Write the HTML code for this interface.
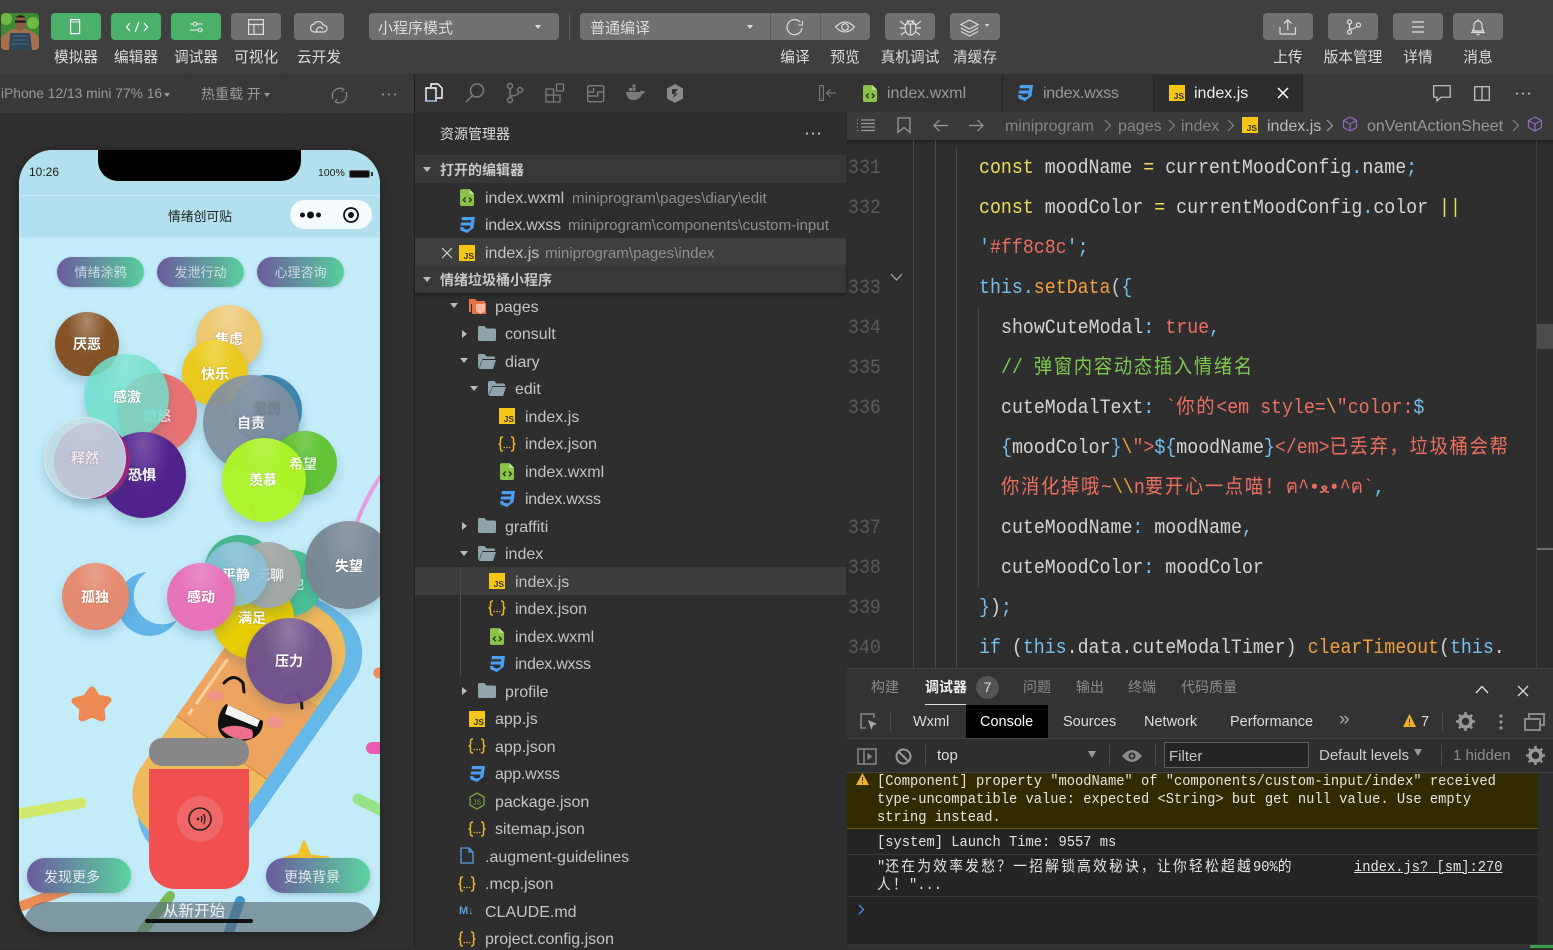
<!DOCTYPE html>
<html lang="zh"><head><meta charset="utf-8"><title>IDE</title>
<style>
html,body{margin:0;padding:0;background:#2e2e2e;}
body{width:1553px;height:948px;position:relative;overflow:hidden;font-family:"Liberation Sans","Noto Sans CJK SC",sans-serif;}
.a{position:absolute;}
.t{position:absolute;white-space:nowrap;line-height:20px;height:20px;}
.btn{position:absolute;top:13px;height:27px;width:50px;border-radius:4px;background:#707070;}
.g{background:#4ab06a;}
.lb{position:absolute;top:48px;line-height:20px;font-size:14.7px;color:#dcdcdc;white-space:nowrap;text-align:center;transform:translateX(-50%);}
svg{position:absolute;overflow:visible;}
.s{fill:none;stroke:#ddd;stroke-width:1.2;}
.n{font-size:16px;color:#c4c4c4;margin-top:1px;}
.w{letter-spacing:-.25px;}
.p{font-size:15.1px;color:#8f8f8f;margin-top:1px;}
.h{font-size:14px;color:#c8c8c8;font-weight:bold;margin-top:1px;}
.tri{position:absolute;width:0;height:0;}
.dn{border-left:4px solid transparent;border-right:4px solid transparent;border-top:5px solid #bbb;}
.rt{border-top:4px solid transparent;border-bottom:4px solid transparent;border-left:5px solid #bbb;}
.c{position:absolute;white-space:pre;font-family:"Liberation Mono","Noto Sans CJK SC",monospace;font-size:20px;line-height:24px;height:24px;color:#d4d4d4;margin-top:2px;transform:scaleX(.9125);transform-origin:0 50%;}
.c i{font-style:normal;}
.zh{letter-spacing:1.92px;}
.ln{position:absolute;left:848px;font-family:"Liberation Mono",monospace;font-size:20px;line-height:24px;color:#5a5a5a;margin-top:2px;transform:scaleX(.9125);transform-origin:0 50%;}
.ky{color:#ecdf5a;}.bl{color:#74c0f0;}.or{color:#f0a03c;}.rd{color:#ec6f5f;}.gr{color:#7ec850;}.dm{color:#c8c8c8;}
.gd{position:absolute;width:1px;background:#484848;}
.k{position:absolute;white-space:pre;font-family:"Liberation Mono","Noto Sans CJK SC",monospace;font-size:15px;line-height:18px;color:#e4e4e4;margin-top:2px;transform:scaleX(.9167);transform-origin:0 50%;}
.kz{letter-spacing:2.44px;}
.d{position:absolute;font-size:14.5px;line-height:20px;color:#ddd;white-space:nowrap;}
.f{font-size:15px;}
.z{position:absolute;font-size:14px;line-height:20px;color:#8c8c8c;white-space:nowrap;}
.sep{position:absolute;width:1px;background:#4a4a4a;}
.b{position:absolute;border-radius:50%;box-shadow:0 6px 10px rgba(40,90,110,.22);}
.bt{position:absolute;transform:translate(-50%,-50%);font-size:14px;font-weight:bold;color:#fff;white-space:nowrap;text-shadow:0 0 2px rgba(0,0,0,.25);}
.pill{position:absolute;top:107px;height:30px;width:87px;border-radius:15px;background:linear-gradient(90deg,#6b5a9e,#58cf9f);color:rgba(255,255,255,.68);font-size:13px;line-height:31px;text-align:center;box-shadow:0 1px 3px rgba(60,110,130,.3);}
.act{position:absolute;top:708px;height:35px;width:104px;border-radius:18px;background:linear-gradient(90deg,#6b5a9e,#5bd3a0);color:rgba(255,255,255,.82);font-size:14px;line-height:38px;box-shadow:0 2px 6px rgba(60,110,130,.3);}
</style></head><body>
<svg width="0" height="0" style="position:absolute">
<defs>
<symbol id="wx" viewBox="0 0 16 18"><path d="M2 0h8l5 5v11a2 2 0 0 1-2 2H2a2 2 0 0 1-2-2V2a2 2 0 0 1 2-2z" fill="#8bc34a"/><path d="M10 0l5 5h-5z" fill="#c5e1a5"/><path d="M6 9l-2.500 2.500L6 14M9.500 9l2.500 2.500L9.500 14" fill="none" stroke="#26361a" stroke-width="1.500"/></symbol>
<symbol id="cs" viewBox="0 0 16 16"><path d="M3 0h13l-1.500 11L8 16 1.500 13.500 1 10h3.400l.2 1.500L8 12.500l3-1 .4-3H1.500l.5-3h10l.3-2.300H2.500z" fill="#4a9ff0"/></symbol>
<symbol id="js" viewBox="0 0 16 16"><rect width="16" height="16" fill="#f5c518"/><text x="4.600" y="14" font-size="8.500" font-weight="bold" fill="#333" font-family="Liberation Sans">JS</text></symbol>
<symbol id="jn" viewBox="0 0 20 16"><path d="M6 1Q3.500 1 3.500 3v3q0 2-2 2 2 0 2 2v3q0 2 2.500 2M14 1q2.500 0 2.500 2v3q0 2 2 2-2 0-2 2v3q0 2-2.500 2" fill="none" stroke="#f0b429" stroke-width="1.500"/><circle cx="7.300" cy="11.500" r=".8" fill="#f0b429"/><circle cx="10" cy="11.500" r=".8" fill="#f0b429"/><circle cx="12.700" cy="11.500" r=".8" fill="#f0b429"/></symbol>
<symbol id="fo" viewBox="0 0 18 15"><path d="M1.500 0h5l2 2.500h8A1.500 1.500 0 0 1 18 4v9.500A1.500 1.500 0 0 1 16.500 15h-15A1.500 1.500 0 0 1 0 13.500v-12A1.500 1.500 0 0 1 1.500 0z" fill="#90a4ae"/></symbol>
<symbol id="fp" viewBox="0 0 18 15"><path d="M1.500 0h5l2 2.500h7A1.500 1.500 0 0 1 17 4v1H4.500L1.500 12V14H1.500A1.500 1.500 0 0 1 0 12.500v-11A1.500 1.500 0 0 1 1.500 0z" fill="#90a4ae"/><path d="M4.500 6H18l-3 9H1z" fill="#90a4ae"/></symbol>
<symbol id="cu" viewBox="0 0 16 16"><path d="M8 1l6.500 3.500v7L8 15l-6.500-3.500v-7zM1.500 4.500L8 8l6.500-3.500M8 8v7" fill="none" stroke="#8e6dbf" stroke-width="1.200"/></symbol>
</defs></svg>

<!-- top bar -->
<div class="a" style="left:0;top:0;width:1553px;height:74px;background:#3f3f3f"></div>
<svg style="left:1px;top:13px" width="38" height="37" viewBox="0 0 38 37"><defs><clipPath id="av"><rect width="38" height="37" rx="4"/></clipPath></defs><g clip-path="url(#av)"><rect width="38" height="37" fill="#3d8a32"/><circle cx="5" cy="6" r="6" fill="#6fb945"/><circle cx="32" cy="10" r="6" fill="#6fb945"/><path d="M0 37V25q5-6 10-8l9-2 9 2q6 2 10 8v12z" fill="#a8704f"/><path d="M9 20h20l2 17H8z" fill="#2d4658"/><path d="M12 23h14M11 27h16M10 31h18" stroke="#4a6a7c"/><ellipse cx="19.500" cy="10" rx="5.500" ry="8" fill="#8d5e42"/><rect x="14" y="7.500" width="11" height="2.200" fill="#1d1d1d"/><path d="M14.500 4.500q5-4.500 10 0z" fill="#1d1d1d"/></g></svg>

<div class="btn g" style="left:51px"></div><div class="btn g" style="left:111px"></div><div class="btn g" style="left:171px"></div>
<div class="btn" style="left:231px"></div><div class="btn" style="left:294px"></div>
<svg style="left:70px;top:19px" width="12" height="16"><rect x=".6" y=".6" width="9" height="14" class="s" style="stroke:#fff"/><path d="M1 3h8" class="s"/></svg>
<svg style="left:125px;top:21px" width="24" height="12"><path d="M5 2L1.500 6 5 10M19 2l3.500 4L19 10M14 1l-4 10" class="s" style="stroke:#fff"/></svg>
<svg style="left:190px;top:21px" width="14" height="12"><path d="M0 3h3M7 3h6M0 9h8M12 9h1" class="s"/><circle cx="5" cy="3" r="1.800" class="s"/><circle cx="10" cy="9" r="1.800" class="s"/></svg>
<svg style="left:248px;top:19px" width="16" height="16"><rect x=".6" y=".6" width="14.800" height="14.800" class="s"/><path d="M.6 5.500h14.800M6 5.500v10" class="s"/></svg>
<svg style="left:310px;top:20px" width="18" height="14"><path d="M5 12a4 4 0 0 1-1-8 5 5 0 0 1 9 1 3.500 3.500 0 0 1 1 7zM7 12a3 3 0 0 1 6-3" class="s"/></svg>
<div class="lb" style="left:76px">模拟器</div><div class="lb" style="left:136px">编辑器</div><div class="lb" style="left:196px">调试器</div><div class="lb" style="left:256px">可视化</div><div class="lb" style="left:319px">云开发</div>

<div class="a" style="left:369px;top:13px;width:190px;height:27px;background:#707070;border-radius:4px"></div>
<div class="t" style="left:378px;top:19px;font-size:15px;color:#dcdcdc">小程序模式</div>
<div class="tri" style="left:535px;top:25px;border-left:3.500px solid transparent;border-right:3.500px solid transparent;border-top:4px solid #ddd"></div>
<div class="a" style="left:569px;top:13px;width:1px;height:27px;background:#5a5a5a"></div>
<div class="a" style="left:580px;top:13px;width:290px;height:27px;background:#707070;border-radius:4px"></div>
<div class="a" style="left:770px;top:13px;width:1px;height:27px;background:#5c5c5c"></div><div class="a" style="left:820px;top:13px;width:1px;height:27px;background:#5c5c5c"></div>
<div class="t" style="left:590px;top:19px;font-size:15px;color:#dcdcdc">普通编译</div>
<div class="tri" style="left:747px;top:25px;border-left:3.500px solid transparent;border-right:3.500px solid transparent;border-top:4px solid #ddd"></div>
<svg style="left:785px;top:18px" width="20" height="18"><path d="M15 4a7.500 7.500 0 1 0 2 6" class="s"/><path d="M13 7h4.500V3" class="s" style="stroke-width:1"/></svg>
<svg style="left:835px;top:20px" width="20" height="14"><path d="M.6 7Q10-3 19.400 7 10 17 .6 7z" class="s"/><circle cx="10" cy="7" r="3.300" class="s"/></svg>
<div class="btn" style="left:885px"></div><div class="btn" style="left:950px"></div>
<svg style="left:900px;top:17px" width="21" height="19"><ellipse cx="10.500" cy="11" rx="5.500" ry="7" class="s"/><path d="M5.500 7h10M10.500 7v11M7 3l2 3M14 3l-2 3M0 4l5 4M21 4l-5 4M0 11h5M16 11h5M1 18l4-3M20 18l-4-3" class="s"/></svg>
<svg style="left:960px;top:19px" width="32" height="17"><path d="M9.500 1L18 5.500 9.500 10 1 5.500zM1 9l8.500 4.500L18 9M1 12.500L9.500 17 18 12.500" class="s"/></svg>
<div class="tri" style="left:985px;top:24px;border-left:2.500px solid transparent;border-right:2.500px solid transparent;border-top:3px solid #ddd"></div>
<div class="lb" style="left:795px">编译</div><div class="lb" style="left:845px">预览</div><div class="lb" style="left:910px">真机调试</div><div class="lb" style="left:975px">清缓存</div>

<div class="btn" style="left:1263px"></div><div class="btn" style="left:1328px"></div><div class="btn" style="left:1393px"></div><div class="btn" style="left:1453px"></div>
<svg style="left:1279px;top:19px" width="18" height="16"><path d="M1 8v7h15.500V8M8.800 11V1M5 4.500L8.800 1l3.800 3.500" class="s"/></svg>
<svg style="left:1346px;top:19px" width="16" height="16"><circle cx="3.500" cy="3" r="2" class="s"/><circle cx="3.500" cy="13" r="2" class="s"/><circle cx="12.500" cy="6" r="2" class="s"/><path d="M3.500 5v6M3.500 10q6 0 7.500-3" class="s"/></svg>
<svg style="left:1411px;top:21px" width="14" height="12"><path d="M1 1h12M1 6h12M1 11h12" class="s"/></svg>
<svg style="left:1471px;top:18px" width="14" height="18"><path d="M1 13q2-1 2-4V7a4 4 0 0 1 8 0v2q0 3 2 4zM0 14.500h14M5.500 16.500h3" class="s"/><path d="M7 1v2" class="s"/></svg>
<div class="lb" style="left:1288px">上传</div><div class="lb" style="left:1353px">版本管理</div><div class="lb" style="left:1418px">详情</div><div class="lb" style="left:1478px">消息</div>

<!-- simulator column -->
<div class="a" style="left:0;top:74px;width:414px;height:874px;background:#303030"></div>
<div class="a" style="left:0;top:74px;width:414px;height:39px;background:#393939"></div>
<div class="a" style="left:186px;top:74px;width:1px;height:39px;background:#353535"></div><div class="a" style="left:285px;top:74px;width:1px;height:39px;background:#353535"></div>
<div class="a" style="left:414px;top:74px;width:1px;height:874px;background:#222"></div>
<div class="t" style="left:1px;top:84px;font-size:13.8px;color:#9a9a9a">iPhone 12/13 mini 77% 16</div>
<div class="tri" style="left:164px;top:93px;border-left:3.500px solid transparent;border-right:3.500px solid transparent;border-top:4px solid #999"></div>
<div class="t" style="left:201px;top:84px;font-size:14px;color:#9a9a9a">热重载 开</div>
<div class="tri" style="left:264px;top:93px;border-left:3px solid transparent;border-right:3px solid transparent;border-top:4px solid #999"></div>
<svg style="left:331px;top:87px" width="17" height="17"><path d="M2 12A7.500 7.500 0 0 1 12 2M15 5a7.500 7.500 0 0 1-10 10" fill="none" stroke="#888" stroke-width="1.200"/><path d="M10 .5L13 2.500 10.500 5M7 16.500L4 14.500 6.500 12" fill="none" stroke="#888"/></svg>
<svg style="left:381px;top:93px" width="16" height="3"><circle cx="2" cy="1.500" r="1" fill="#999"/><circle cx="8" cy="1.500" r="1" fill="#999"/><circle cx="14" cy="1.500" r="1" fill="#999"/></svg>

<!-- phone -->
<div class="a" style="left:19px;top:150px;width:361px;height:782px;border-radius:34px;overflow:hidden;background:#c3ebf8;box-shadow:0 2px 12px rgba(0,0,0,.35)">
<svg style="left:0;top:0" width="361" height="782" viewBox="19 150 361 782">
<path d="M380 477Q365 500 357 522" fill="none" stroke="#e79ede" stroke-width="4" stroke-linecap="round"/>
<path d="M252 505l2 15" stroke="#e85cb0" stroke-width="4"/>
<path d="M19 814l62-11" stroke="#cfe96a" stroke-width="11" stroke-linecap="round"/>
<path d="M358 799l24 12" stroke="#97e388" stroke-width="11" stroke-linecap="round"/>
<path d="M372 748h12" stroke="#ea5cb0" stroke-width="12" stroke-linecap="round"/>
<path d="M379 673h6" stroke="#ee8a55" stroke-width="11" stroke-linecap="round"/>
<path d="M19 907l55-20" stroke="#ee8a55" stroke-width="10"/>
<path d="M142 932l28-36" stroke="#7ab95a" stroke-width="10" stroke-linecap="round"/>
<path d="M228 935l12-34" stroke="#3d94d0" stroke-width="10" stroke-linecap="round"/>
<path d="M92 690l5 8 11 2-7 8 1 10-10-4-10 4 1-10-8-7 11-3z" fill="#ee8b55" stroke="#ee8b55" stroke-width="7" stroke-linejoin="round"/>
<path d="M304 842l6 14 18 2-10 14-30 0-3-14 14-3z" fill="#f2c22c" stroke="#f2c22c" stroke-width="3" stroke-linejoin="round"/>
<path d="M147 572a32 32 0 1 0 30 48 27 27 0 0 1-30-48z" fill="#60b4e8"/>
<g transform="translate(250,733) rotate(-55)"><rect x="-150" y="-55" width="300" height="110" rx="48" fill="#66b8e8"/></g>
<g transform="translate(239,723) rotate(-55)"><rect x="-140" y="-55" width="280" height="110" rx="48" fill="#eeb95c"/><rect x="-30" y="-55" width="88" height="110" fill="#eda45f"/><path d="M-30-55V55" stroke="#dc8d48" stroke-width="1.500"/><path d="M58-55V55" stroke="#e39650" stroke-width="1"/><path d="M-22-46H60" stroke="#f6d2a0" stroke-width="3" stroke-dasharray="7 6 55" fill="none"/></g>
<ellipse cx="216" cy="696" rx="9" ry="5" fill="#f09090" opacity=".85"/><ellipse cx="275" cy="722" rx="8" ry="6" fill="#f09090" opacity=".85"/>
<path d="M224 683q10-11 19 0l1 9" fill="none" stroke="#111" stroke-width="3" stroke-linecap="round"/>
<path d="M284 698q10-8 17 0l1 10" fill="none" stroke="#111" stroke-width="3" stroke-linecap="round"/>
<path d="M226 704l37 17q0 12-10 17t-23 2q-12-4-12-16 0-12 8-20z" fill="#111"/>
<path d="M228 705l32 15-3 7-32-13z" fill="#f4f4f4"/>
<path d="M221 729q14-7 31 1 2 4 0 8-18 5-31-9z" fill="#f0708c"/>
</svg>
<div class="a" style="left:0;top:0;width:361px;height:87px;background:#b3e0ee"></div>
<div class="a" style="left:0;top:45px;width:361px;height:1px;background:#c6ecf5"></div>
<div class="a" style="left:79px;top:0;width:203px;height:31px;background:#000;border-radius:0 0 20px 20px"></div>
<div class="t" style="left:10px;top:12px;font-size:12px;color:#222">10:26</div>
<div class="t" style="left:299px;top:13px;font-size:10.500px;color:#222">100%</div>
<div class="a" style="left:330px;top:20px;width:19px;height:6px;background:#111;border:1px solid #666;border-radius:2px"></div>
<div class="a" style="left:352px;top:22px;width:1.500px;height:4px;background:#333"></div>
<div class="t" style="left:149px;top:57px;font-size:12.800px;color:#222">情绪创可贴</div>
<div class="a" style="left:271px;top:50px;width:82px;height:29px;border-radius:15px;background:#f5fbfe"></div>
<svg style="left:281px;top:57px" width="60" height="16"><circle cx="2.500" cy="8" r="2.500" fill="#111"/><circle cx="10.500" cy="8" r="3.500" fill="#111"/><circle cx="18.500" cy="8" r="2.500" fill="#111"/><circle cx="51" cy="8" r="7" fill="none" stroke="#111" stroke-width="1.800"/><circle cx="51" cy="8" r="3" fill="#111"/></svg>

<div class="pill" style="left:38px">情绪涂鸦</div><div class="pill" style="left:138px">发泄行动</div><div class="pill" style="left:238px">心理咨询</div>

<!-- bubbles: coordinates relative to phone -->
<div class="b" style="left:36px;top:162px;width:64px;height:64px;background:radial-gradient(ellipse at 50% 15%,rgba(255,255,255,.32),rgba(255,255,255,0) 45%),#855326"></div>
<div class="bt" style="left:68px;top:194px">厌恶</div>
<div class="b" style="left:177px;top:155px;width:66px;height:66px;background:radial-gradient(ellipse at 50% 15%,rgba(255,255,255,.25),rgba(255,255,255,0) 45%),#edc872"></div>
<div class="bt" style="left:210px;top:189px">焦虑</div>
<div class="b" style="left:163px;top:190px;width:66px;height:66px;background:radial-gradient(ellipse at 50% 15%,rgba(255,255,255,.22),rgba(255,255,255,0) 45%),#ebca1f"></div>
<div class="bt" style="left:196px;top:224px">快乐</div>
<div class="b" style="left:98px;top:223px;width:80px;height:80px;background:#e57373"></div>
<div class="bt" style="left:138px;top:266px;opacity:.8">愤怒</div>
<div class="b" style="left:65px;top:204px;width:85px;height:85px;background:radial-gradient(ellipse at 50% 15%,rgba(255,255,255,.15),rgba(255,255,255,0) 45%),rgba(112,222,204,.86)"></div>
<div class="bt" style="left:108px;top:247px;opacity:.95">感激</div>
<div class="b" style="left:81px;top:282px;width:86px;height:86px;background:radial-gradient(ellipse at 50% 15%,rgba(255,255,255,.22),rgba(255,255,255,0) 45%),#51228c"></div>
<div class="bt" style="left:123px;top:325px">恐惧</div>
<div class="b" style="left:35px;top:273px;width:76px;height:76px;background:#a4217d"></div>
<div class="b" style="left:25px;top:267px;width:82px;height:82px;background:radial-gradient(ellipse at 50% 15%,rgba(255,255,255,.12),rgba(255,255,255,0) 45%),rgba(192,219,226,.88);border:1px solid rgba(255,255,255,.35);box-sizing:border-box"></div>
<div class="bt" style="left:66px;top:308px;color:#f3e3ee">释然</div>
<div class="b" style="left:213px;top:225px;width:70px;height:70px;background:#3e86ad"></div>
<div class="b" style="left:184px;top:225px;width:96px;height:96px;background:radial-gradient(ellipse at 50% 15%,rgba(255,255,255,.12),rgba(255,255,255,0) 45%),rgba(126,142,158,.93)"></div>
<div class="bt" style="left:248px;top:259px;color:#6b7480;opacity:.5">悲伤</div>
<div class="bt" style="left:232px;top:273px;opacity:.9">自责</div>
<div class="b" style="left:254px;top:281px;width:64px;height:64px;background:radial-gradient(ellipse at 50% 15%,rgba(255,255,255,.15),rgba(255,255,255,0) 45%),#62c436"></div>
<div class="b" style="left:203px;top:288px;width:84px;height:84px;background:radial-gradient(ellipse at 50% 15%,rgba(255,255,255,.12),rgba(255,255,255,0) 45%),rgba(174,246,36,.95)"></div>
<div class="bt" style="left:284px;top:314px;opacity:.8">希望</div>
<div class="bt" style="left:244px;top:330px">羡慕</div>

<div class="b" style="left:186px;top:385px;width:70px;height:66px;background:#48b890"></div>
<div class="b" style="left:238px;top:400px;width:66px;height:66px;background:#4cc098"></div>
<div class="bt" style="left:278px;top:434px;opacity:.7">他</div>
<div class="b" style="left:193px;top:427px;width:82px;height:82px;background:radial-gradient(ellipse at 50% 15%,rgba(255,255,255,.1),rgba(255,255,255,0) 45%),#e8cc00;opacity:.97"></div>
<div class="bt" style="left:233px;top:468px">满足</div>
<div class="b" style="left:227px;top:468px;width:86px;height:86px;background:radial-gradient(ellipse at 50% 15%,rgba(255,255,255,.22),rgba(255,255,255,0) 45%),rgba(109,79,143,.96)"></div>
<div class="bt" style="left:270px;top:511px">压力</div>
<div class="b" style="left:216px;top:392px;width:66px;height:66px;background:radial-gradient(ellipse at 50% 15%,rgba(255,255,255,.1),rgba(255,255,255,0) 45%),#a2a8a6"></div>
<div class="bt" style="left:251px;top:425px;opacity:.8">无聊</div>
<div class="b" style="left:185px;top:392px;width:64px;height:64px;background:radial-gradient(ellipse at 50% 15%,rgba(255,255,255,.15),rgba(255,255,255,0) 45%),rgba(138,192,218,.88)"></div>
<div class="bt" style="left:217px;top:425px">平静</div>
<div class="b" style="left:43px;top:413px;width:67px;height:67px;background:radial-gradient(ellipse at 50% 15%,rgba(255,255,255,.2),rgba(255,255,255,0) 45%),#e48a70"></div>
<div class="bt" style="left:76px;top:447px">孤独</div>
<div class="b" style="left:148px;top:413px;width:68px;height:68px;background:radial-gradient(ellipse at 50% 15%,rgba(255,255,255,.2),rgba(255,255,255,0) 45%),#e673b8"></div>
<div class="bt" style="left:182px;top:447px">感动</div>
<div class="b" style="left:286px;top:371px;width:88px;height:88px;background:radial-gradient(ellipse at 50% 15%,rgba(255,255,255,.15),rgba(255,255,255,0) 45%),rgba(120,134,148,.97)"></div>
<div class="bt" style="left:330px;top:416px">失望</div>

<!-- trash -->
<div class="a" style="left:130px;top:588px;width:100px;height:28px;border-radius:13px;background:#888"></div>
<div class="a" style="left:130px;top:619px;width:100px;height:120px;border-radius:0 0 26px 26px;background:#f05050"></div>
<div class="a" style="left:158px;top:646px;width:46px;height:46px;border-radius:50%;background:#f16767"></div>
<svg style="left:169px;top:657px" width="24" height="24"><circle cx="12" cy="12" r="11" fill="none" stroke="#222" stroke-width="1.600"/><circle cx="10" cy="12" r="1.300" fill="#222"/><path d="M13 9q2 3 0 6M15.500 7q3 5 0 10" fill="none" stroke="#222" stroke-width="1.300"/></svg>

<div class="act" style="left:8px;padding-left:17px;box-sizing:border-box">发现更多</div>
<div class="act" style="left:247px;padding-left:18px;box-sizing:border-box">更换背景</div>
<div class="a" style="left:5px;top:752px;width:351px;height:40px;border-radius:22px 22px 0 0;background:rgba(90,110,120,.66)"></div>
<div class="t" style="left:144px;top:752px;font-size:15.5px;color:#f0f4f6">从新开始</div>
<div class="a" style="left:126px;top:769px;width:108px;height:4px;border-radius:2px;background:#111"></div>
</div>

<!-- explorer -->
<div class="a" style="left:415px;top:74px;width:432px;height:874px;background:#2e2e2e"></div>
<div class="a" style="left:415px;top:74px;width:432px;height:38px;background:#333"></div>
<svg style="left:425px;top:83px" width="20" height="20"><path d="M6 4V1h7l4 4v10h-5" fill="none" stroke="#fff" stroke-width="1.400"/><path d="M1 5h10v13H1z" fill="none" stroke="#fff" stroke-width="1.400"/><path d="M1 18h10" stroke="#6aa3e0" stroke-width="1"/></svg>
<svg style="left:465px;top:83px" width="20" height="20"><circle cx="12" cy="7.500" r="6.500" fill="none" stroke="#7c7c7c" stroke-width="1.500"/><path d="M7.500 12.500L1 19" stroke="#7c7c7c" stroke-width="1.500"/></svg>
<svg style="left:506px;top:83px" width="18" height="20"><circle cx="4" cy="3" r="2.500" fill="none" stroke="#7c7c7c" stroke-width="1.500"/><circle cx="4" cy="17" r="2.500" fill="none" stroke="#7c7c7c" stroke-width="1.500"/><circle cx="14" cy="7" r="2.500" fill="none" stroke="#7c7c7c" stroke-width="1.500"/><path d="M4 6v8M4 13q8 0 9-4" fill="none" stroke="#7c7c7c" stroke-width="1.500"/></svg>
<svg style="left:545px;top:83px" width="20" height="20"><path d="M1 6h7.500v6H1zM1 12h7.500v7H1zM8.500 12H15v7H8.500z" fill="none" stroke="#7c7c7c" stroke-width="1.300"/><rect x="11.500" y="1" width="7" height="7" fill="none" stroke="#7c7c7c" stroke-width="1.300"/></svg>
<svg style="left:587px;top:85px" width="18" height="18"><rect x=".7" y=".7" width="16" height="16" rx="1.500" fill="none" stroke="#7c7c7c" stroke-width="1.400"/><path d="M.7 7h6V3M.7 11h10V7h6" fill="none" stroke="#7c7c7c" stroke-width="1.400"/></svg>
<svg style="left:625px;top:85px" width="20" height="16"><path d="M1 7h14q1-2 2-1 2 0 3 1-1 2-3 2-2 6-9 6-6 0-7-8z" fill="#7c7c7c"/><path d="M4 3h3v3H4zM7.500 3h3v3h-3zM7.500-.5h3v3h-3z" fill="#7c7c7c"/></svg>
<svg style="left:666px;top:84px" width="18" height="19"><path d="M9 0l8 4.500v10L9 19l-8-4.500v-10z" fill="#8a8a8a"/><path d="M6 5h6L8.500 9.500H12L7 14l1.500-4H6z" fill="#333"/></svg>
<svg style="left:819px;top:85px" width="18" height="16"><rect x=".6" y=".6" width="3.800" height="14.800" fill="none" stroke="#777" stroke-width="1.200"/><path d="M17 8H8M11.500 4L7.500 8l4 4" fill="none" stroke="#777" stroke-width="1.200"/></svg>
<div class="t" style="left:440px;top:124px;font-size:14px;color:#ddd">资源管理器</div>
<svg style="left:805px;top:132px" width="16" height="3"><circle cx="2" cy="1.500" r="1.100" fill="#ccc"/><circle cx="8" cy="1.500" r="1.100" fill="#ccc"/><circle cx="14" cy="1.500" r="1.100" fill="#ccc"/></svg>

<div class="a" style="left:415px;top:155px;width:431px;height:28px;background:#383838"></div>
<div class="tri dn" style="left:423px;top:167px"></div><div class="t h" style="left:440px;top:159px">打开的编辑器</div>
<div class="a" style="left:415px;top:238px;width:431px;height:27px;background:#3f3f3f"></div>
<svg style="left:460px;top:189px" width="15" height="17"><use href="#wx"/></svg><div class="t n" style="left:485px;top:188px">index.wxml</div><div class="t p" style="left:572px;top:188px">miniprogram\pages\diary\edit</div>
<svg style="left:459px;top:217px" width="16" height="16"><use href="#cs"/></svg><div class="t n w" style="left:485px;top:215px">index.wxss</div><div class="t p" style="left:568px;top:215px">miniprogram\components\custom-input</div>
<svg style="left:441px;top:247px" width="12" height="12"><path d="M1 1l10 10M11 1L1 11" stroke="#ccc" stroke-width="1.200"/></svg>
<svg style="left:459px;top:245px" width="16" height="16"><use href="#js"/></svg><div class="t n" style="left:485px;top:243px">index.js</div><div class="t p" style="left:545px;top:243px">miniprogram\pages\index</div>
<div class="a" style="left:415px;top:265px;width:431px;height:28px;background:#383838;box-shadow:0 2px 3px rgba(0,0,0,.35)"></div>
<div class="tri dn" style="left:423px;top:277px"></div><div class="t h" style="left:440px;top:269px">情绪垃圾桶小程序</div>

<div class="tri dn" style="left:450px;top:303px"></div>
<svg style="left:468px;top:298px" width="20" height="17"><path d="M1 1h6l2 2h8v3H3v8H1z" fill="#e8734a"/><path d="M4 5h14v11H4z" fill="#e8734a"/><path d="M8 6h9v7l-4.500 3L8 13z" fill="#f5b8a0"/></svg>
<div class="t n" style="left:495px;top:297px">pages</div>
<div class="tri rt" style="left:462px;top:330px"></div><svg style="left:478px;top:326px" width="18" height="15"><use href="#fo"/></svg><div class="t n" style="left:505px;top:324px">consult</div>
<div class="tri dn" style="left:460px;top:358px"></div><svg style="left:478px;top:354px" width="18" height="15"><use href="#fp"/></svg><div class="t n" style="left:505px;top:352px">diary</div>
<div class="tri dn" style="left:470px;top:386px"></div><svg style="left:488px;top:381px" width="18" height="15"><use href="#fp"/></svg><div class="t n" style="left:515px;top:379px">edit</div>
<svg style="left:499px;top:408px" width="16" height="16"><use href="#js"/></svg><div class="t n" style="left:525px;top:407px">index.js</div>
<svg style="left:497px;top:436px" width="20" height="16"><use href="#jn"/></svg><div class="t n" style="left:525px;top:434px">index.json</div>
<svg style="left:500px;top:463px" width="15" height="17"><use href="#wx"/></svg><div class="t n" style="left:525px;top:462px">index.wxml</div>
<svg style="left:499px;top:491px" width="16" height="16"><use href="#cs"/></svg><div class="t n w" style="left:525px;top:489px">index.wxss</div>
<div class="tri rt" style="left:462px;top:522px"></div><svg style="left:478px;top:518px" width="18" height="15"><use href="#fo"/></svg><div class="t n" style="left:505px;top:517px">graffiti</div>
<div class="tri dn" style="left:460px;top:551px"></div><svg style="left:478px;top:546px" width="18" height="15"><use href="#fp"/></svg><div class="t n" style="left:505px;top:544px">index</div>
<div class="a" style="left:415px;top:567px;width:431px;height:28px;background:#3c3c3c"></div>
<div class="a" style="left:460px;top:567px;width:1px;height:110px;background:#4a4a4a"></div>
<svg style="left:489px;top:573px" width="16" height="16"><use href="#js"/></svg><div class="t n" style="left:515px;top:572px">index.js</div>
<svg style="left:487px;top:600px" width="20" height="16"><use href="#jn"/></svg><div class="t n" style="left:515px;top:599px">index.json</div>
<svg style="left:490px;top:628px" width="15" height="17"><use href="#wx"/></svg><div class="t n" style="left:515px;top:627px">index.wxml</div>
<svg style="left:489px;top:656px" width="16" height="16"><use href="#cs"/></svg><div class="t n w" style="left:515px;top:654px">index.wxss</div>
<div class="tri rt" style="left:462px;top:687px"></div><svg style="left:478px;top:683px" width="18" height="15"><use href="#fo"/></svg><div class="t n" style="left:505px;top:682px">profile</div>
<svg style="left:469px;top:711px" width="16" height="16"><use href="#js"/></svg><div class="t n" style="left:495px;top:709px">app.js</div>
<svg style="left:467px;top:738px" width="20" height="16"><use href="#jn"/></svg><div class="t n" style="left:495px;top:737px">app.json</div>
<svg style="left:469px;top:766px" width="16" height="16"><use href="#cs"/></svg><div class="t n w" style="left:495px;top:764px">app.wxss</div>
<svg style="left:469px;top:792px" width="16" height="18"><path d="M8 1l7 4v8l-7 4-7-4V5z" fill="none" stroke="#7ba33f" stroke-width="1.300"/><text x="4" y="12.500" font-size="7" fill="#7ba33f" font-family="Liberation Sans">JS</text></svg><div class="t n" style="left:495px;top:792px">package.json</div>
<svg style="left:467px;top:821px" width="20" height="16"><use href="#jn"/></svg><div class="t n" style="left:495px;top:819px">sitemap.json</div>
<svg style="left:460px;top:847px" width="14" height="17"><path d="M1 1h8l4 4v11H1zM9 1v4h4" fill="none" stroke="#5a9fe0" stroke-width="1.300"/></svg><div class="t n" style="left:485px;top:847px">.augment-guidelines</div>
<svg style="left:457px;top:876px" width="20" height="16"><use href="#jn"/></svg><div class="t n" style="left:485px;top:874px">.mcp.json</div>
<div class="t" style="left:459px;top:901px;font-size:11px;font-weight:bold;color:#5a9fe0">M↓</div><div class="t n" style="left:485px;top:902px">CLAUDE.md</div>
<svg style="left:457px;top:931px" width="20" height="16"><use href="#jn"/></svg><div class="t n" style="left:485px;top:929px">project.config.json</div>

<!-- editor -->
<div class="a" style="left:847px;top:74px;width:706px;height:66px;background:#3a3a3a"></div>
<div class="a" style="left:847px;top:74px;width:307px;height:38px;background:#333"></div>
<div class="a" style="left:1002px;top:74px;width:1px;height:38px;background:#262626"></div>
<div class="a" style="left:1153px;top:74px;width:150px;height:38px;background:#2d2d2d;border-left:1px solid #262626;border-right:1px solid #262626;box-sizing:border-box"></div>
<svg style="left:863px;top:85px" width="15" height="17"><use href="#wx"/></svg><div class="t n" style="left:887px;top:83px;color:#999">index.wxml</div>
<svg style="left:1017px;top:85px" width="16" height="16"><use href="#cs"/></svg><div class="t n w" style="left:1043px;top:83px;color:#999">index.wxss</div>
<svg style="left:1169px;top:85px" width="16" height="16"><use href="#js"/></svg><div class="t n" style="left:1194px;top:83px;color:#eee">index.js</div>
<svg style="left:1277px;top:87px" width="12" height="12"><path d="M1 1l10 10M11 1L1 11" stroke="#fff" stroke-width="1.500"/></svg>
<svg style="left:1433px;top:85px" width="18" height="17"><path d="M.7.7h16.500v11.500H8L4 16v-3.800H.7z" fill="none" stroke="#ccc" stroke-width="1.200"/></svg>
<svg style="left:1474px;top:86px" width="16" height="15"><rect x=".7" y=".7" width="14.600" height="13.600" fill="none" stroke="#ccc" stroke-width="1.200"/><path d="M8 .7v13.600" stroke="#ccc" stroke-width="1.200"/></svg>
<svg style="left:1515px;top:92px" width="16" height="3"><circle cx="2" cy="1.500" r="1" fill="#ccc"/><circle cx="8" cy="1.500" r="1" fill="#ccc"/><circle cx="14" cy="1.500" r="1" fill="#ccc"/></svg>
<svg style="left:857px;top:119px" width="18" height="13"><path d="M0 1h1M4 1h14M0 4.500h1M4 4.500h14M0 8h1M4 8h14M0 11.500h1M4 11.500h14" stroke="#999" stroke-width="1.200"/></svg>
<svg style="left:897px;top:117px" width="14" height="17"><path d="M1 1h12v14.500L7 10.500l-6 5z" fill="none" stroke="#999" stroke-width="1.300"/></svg>
<svg style="left:933px;top:119px" width="15" height="13"><path d="M15 6.500H1M6.500 1L1 6.500 6.500 12" fill="none" stroke="#999" stroke-width="1.200"/></svg>
<svg style="left:969px;top:119px" width="15" height="13"><path d="M0 6.500h14M8.500 1L14 6.500 8.500 12" fill="none" stroke="#999" stroke-width="1.200"/></svg>
<div class="t n" style="left:1005px;top:116px;color:#858585">miniprogram</div>
<svg style="left:1104px;top:119px" width="8" height="13"><path d="M1 1l5.500 5.500L1 12" fill="none" stroke="#888" stroke-width="1.100"/></svg>
<div class="t n" style="left:1118px;top:116px;color:#858585">pages</div>
<svg style="left:1168px;top:119px" width="8" height="13"><path d="M1 1l5.500 5.500L1 12" fill="none" stroke="#888" stroke-width="1.100"/></svg>
<div class="t n" style="left:1181px;top:116px;color:#858585">index</div>
<svg style="left:1227px;top:119px" width="8" height="13"><path d="M1 1l5.500 5.500L1 12" fill="none" stroke="#888" stroke-width="1.100"/></svg>
<svg style="left:1242px;top:117px" width="16" height="16"><use href="#js"/></svg>
<div class="t n" style="left:1267px;top:116px;color:#bbb">index.js</div>
<svg style="left:1326px;top:119px" width="8" height="13"><path d="M1 1l5.500 5.500L1 12" fill="none" stroke="#aaa" stroke-width="1.100"/></svg>
<svg style="left:1342px;top:116px" width="16" height="16"><use href="#cu"/></svg>
<div class="t n" style="left:1367px;top:116px;color:#999">onVentActionSheet</div>
<svg style="left:1512px;top:119px" width="8" height="13"><path d="M1 1l5.500 5.500L1 12" fill="none" stroke="#888" stroke-width="1.100"/></svg>
<svg style="left:1527px;top:116px" width="16" height="16"><use href="#cu"/></svg>

<div class="a" style="left:847px;top:140px;width:706px;height:529px;background:#2e2e2e;box-shadow:inset 0 3px 3px -2px rgba(0,0,0,.5)"></div>
<div class="gd" style="left:913px;top:140px;height:529px"></div><div class="gd" style="left:935px;top:140px;height:529px"></div><div class="gd" style="left:956px;top:147px;height:522px"></div><div class="gd" style="left:978px;top:307px;height:280px"></div>
<div class="a" style="left:1536px;top:140px;width:1px;height:529px;background:#3e3e3e"></div>
<div class="a" style="left:1537px;top:324px;width:16px;height:25px;background:#4c4c4c"></div>
<div class="a" style="left:1537px;top:548px;width:16px;height:2px;background:#6a6a6a"></div>

<div class="ln" style="top:155px">331</div><div class="ln" style="top:195px">332</div><div class="ln" style="top:275px">333</div><div class="ln" style="top:315px">334</div><div class="ln" style="top:355px">335</div><div class="ln" style="top:395px">336</div><div class="ln" style="top:515px">337</div><div class="ln" style="top:555px">338</div><div class="ln" style="top:595px">339</div><div class="ln" style="top:635px">340</div>
<svg style="left:890px;top:273px" width="13" height="9"><path d="M1 1l5.500 6L12 1" fill="none" stroke="#aaa" stroke-width="1.200"/></svg>

<div class="c" style="left:979px;top:155px"><i class="ky">const</i> moodName <i class="ky">=</i> currentMoodConfig<i class="bl">.</i>name<i class="bl">;</i></div>
<div class="c" style="left:979px;top:195px"><i class="ky">const</i> moodColor <i class="ky">=</i> currentMoodConfig<i class="bl">.</i>color <i class="ky">||</i></div>
<div class="c" style="left:979px;top:235px"><i class="bl">'</i><i class="rd">#ff8c8c</i><i class="bl">'</i><i class="bl">;</i></div>
<div class="c" style="left:979px;top:275px"><i class="bl">this</i><i class="bl">.</i><i class="or">setData</i><i class="dm">(</i><i class="bl">{</i></div>
<div class="c" style="left:1001px;top:315px">showCuteModal<i class="bl">:</i> <i class="rd">true</i><i class="bl">,</i></div>
<div class="c" style="left:1001px;top:355px;color:#7ec850">// <span class="zh">弹窗内容动态插入情绪名</span></div>
<div class="c" style="left:1001px;top:395px">cuteModalText<i class="bl">:</i> <i class="rd">`<span class="zh">你的</span>&lt;em style=</i><i class="or">\</i><i class="rd">"color:</i><i class="bl">$</i></div>
<div class="c" style="left:1001px;top:435px"><i class="bl">{</i>moodColor<i class="bl">}</i><i class="or">\</i><i class="rd">"&gt;</i><i class="bl">${</i>moodName<i class="bl">}</i><i class="rd">&lt;/em&gt;<span class="zh">已丢弃，垃圾桶会帮</span></i></div>
<div class="c rd" style="left:1001px;top:475px;color:#ec6f5f"><span class="zh">你消化掉哦</span>~<i class="or">\\</i>n<span class="zh">要开心一点喵</span><span style="letter-spacing:-9px">！</span> ฅ^•ﻌ•^ฅ`<i class="bl">,</i></div>
<div class="c" style="left:1001px;top:515px">cuteMoodName<i class="bl">:</i> moodName<i class="bl">,</i></div>
<div class="c" style="left:1001px;top:555px">cuteMoodColor<i class="bl">:</i> moodColor</div>
<div class="c" style="left:979px;top:595px"><i class="bl">}</i>)<i class="bl">;</i></div>
<div class="c" style="left:979px;top:635px"><i class="bl">if</i> (<i class="bl">this</i>.data.cuteModalTimer) <i class="or">clearTimeout</i>(<i class="bl">this</i>.</div>

<!-- bottom panel -->
<div class="a" style="left:847px;top:668px;width:706px;height:280px;background:#242424"></div>
<div class="a" style="left:847px;top:668px;width:706px;height:37px;background:#333;border-top:1px solid #444;box-sizing:border-box"></div>
<div class="z" style="left:871px;top:677px">构建</div>
<div class="z" style="left:925px;top:677px;color:#eee;font-weight:bold">调试器</div>
<div class="a" style="left:925px;top:704px;width:41px;height:1px;background:#ddd"></div>
<div class="a" style="left:976px;top:676px;width:23px;height:23px;border-radius:50%;background:#555;color:#ddd;font-size:14px;line-height:23px;text-align:center">7</div>
<div class="z" style="left:1023px;top:677px">问题</div><div class="z" style="left:1076px;top:677px">输出</div><div class="z" style="left:1128px;top:677px">终端</div><div class="z" style="left:1181px;top:677px">代码质量</div>
<svg style="left:1475px;top:685px" width="14" height="9"><path d="M1 8l6-6.500L13 8" fill="none" stroke="#ddd" stroke-width="1.300"/></svg>
<svg style="left:1517px;top:685px" width="12" height="12"><path d="M1 1l10 10M11 1L1 11" stroke="#ddd" stroke-width="1.300"/></svg>

<div class="a" style="left:847px;top:705px;width:706px;height:33px;background:#333;border-bottom:1px solid #444"></div>
<svg style="left:860px;top:713px" width="18" height="18"><path d="M14 5V1H1v14h5" fill="none" stroke="#999" stroke-width="1.300"/><path d="M8 7l9 4-4 1.500L11.500 17z" fill="#aaa"/></svg>
<div class="sep" style="left:890px;top:711px;height:20px"></div>
<div class="d" style="left:913px;top:712px">Wxml</div>
<div class="a" style="left:966px;top:705px;width:82px;height:33px;background:#000"></div>
<div class="d" style="left:980px;top:712px;color:#fff">Console</div>
<div class="d" style="left:1063px;top:712px">Sources</div><div class="d" style="left:1144px;top:712px">Network</div><div class="d" style="left:1230px;top:712px">Performance</div><div class="d" style="left:1339px;top:710px;color:#aaa;font-size:19px">»</div>
<svg style="left:1403px;top:714px" width="13" height="13"><path d="M6.500 0L13 13H0z" fill="#f0b429"/><path d="M6.500 4.500v4.500M6.500 10v1.500" stroke="#333"/></svg>
<div class="d" style="left:1421px;top:712px">7</div>
<div class="sep" style="left:1442px;top:711px;height:20px"></div>
<svg style="left:1456px;top:712px" width="19" height="19"><circle cx="9.500" cy="9.500" r="5.500" fill="none" stroke="#999" stroke-width="3.500"/><path d="M9.500 0v3M9.500 16v3M0 9.500h3M16 9.500h3M2.800 2.800l2 2M14.200 14.200l2 2M2.800 16.200l2-2M14.200 4.800l2-2" stroke="#999" stroke-width="2.500"/></svg>
<svg style="left:1498px;top:713px" width="6" height="18"><circle cx="3" cy="3" r="1.600" fill="#999"/><circle cx="3" cy="9" r="1.600" fill="#999"/><circle cx="3" cy="15" r="1.600" fill="#999"/></svg>
<svg style="left:1524px;top:713px" width="22" height="18"><rect x="5" y="1" width="15" height="11" fill="none" stroke="#888" stroke-width="2"/><rect x="1" y="6" width="15" height="11" fill="#333" stroke="#888" stroke-width="2"/></svg>

<div class="a" style="left:847px;top:739px;width:706px;height:33px;background:#2e2e2e;border-bottom:1px solid #444"></div>
<svg style="left:857px;top:748px" width="20" height="17"><rect x="1" y="1" width="18" height="15" fill="none" stroke="#888" stroke-width="1.500"/><path d="M7 1v15" stroke="#888" stroke-width="1.500"/><path d="M10.500 5l5 3.500-5 3.500z" fill="#888"/></svg>
<svg style="left:895px;top:748px" width="17" height="17"><circle cx="8.500" cy="8.500" r="7" fill="none" stroke="#999" stroke-width="2"/><path d="M3.500 3.500l10 10" stroke="#999" stroke-width="2"/></svg>
<div class="sep" style="left:925px;top:745px;height:21px"></div>
<div class="d f" style="left:937px;top:746px">top</div>
<div class="tri" style="left:1088px;top:751px;border-left:4px solid transparent;border-right:4px solid transparent;border-top:7px solid #999"></div>
<div class="sep" style="left:1109px;top:745px;height:21px"></div>
<svg style="left:1122px;top:749px" width="20" height="14"><path d="M0 7Q10-5 20 7 10 19 0 7z" fill="#8c8c8c"/><circle cx="10" cy="7" r="3.500" fill="#2e2e2e"/><circle cx="10" cy="7" r="1.600" fill="#8c8c8c"/></svg>
<div class="sep" style="left:1155px;top:745px;height:21px"></div>
<div class="a" style="left:1164px;top:742px;width:145px;height:26px;background:#242424;border:1px solid #5f5f5f;box-sizing:border-box"></div>
<div class="d f" style="left:1169px;top:747px;color:#c4c4c4">Filter</div>
<div class="d f" style="left:1319px;top:746px;color:#ccc">Default levels</div>
<div class="tri" style="left:1414px;top:749px;border-left:4px solid transparent;border-right:4px solid transparent;border-top:7px solid #999"></div>
<div class="sep" style="left:1441px;top:745px;height:21px"></div>
<div class="d f" style="left:1453px;top:746px;color:#8c8c8c">1 hidden</div>
<svg style="left:1526px;top:746px" width="19" height="19"><circle cx="9.500" cy="9.500" r="5.500" fill="none" stroke="#999" stroke-width="3.500"/><path d="M9.500 0v3M9.500 16v3M0 9.500h3M16 9.500h3M2.800 2.800l2 2M14.200 14.200l2 2M2.800 16.200l2-2M14.200 4.800l2-2" stroke="#999" stroke-width="2.500"/></svg>

<div class="a" style="left:847px;top:773px;width:691px;height:56px;background:#332b00;border-bottom:1px solid #665500;box-sizing:border-box"></div>
<svg style="left:856px;top:773px" width="13" height="12"><path d="M6.500 0L13 12H0z" fill="#f0b429"/><path d="M6.500 4v4M6.500 9v1.500" stroke="#333"/></svg>
<div class="k" style="left:877px;top:771px">[Component] property "moodName" of "components/custom-input/index" received</div>
<div class="k" style="left:877px;top:789px">type-uncompatible value: expected &lt;String&gt; but get null value. Use empty</div>
<div class="k" style="left:877px;top:807px">string instead.</div>
<div class="k" style="left:877px;top:832px">[system] Launch Time: 9557 ms</div>
<div class="a" style="left:847px;top:854px;width:691px;height:1px;background:#3a3a3a"></div>
<div class="k" style="left:877px;top:857px">"<span class="kz">还在为效率发愁？一招解锁高效秘诀，让你轻松超越</span>90%<span class="kz">的</span></div>
<div class="k" style="left:877px;top:875px"><span class="kz">人！</span>"...</div>
<div class="k" style="left:1354px;top:857px;text-decoration:underline">index.js? [sm]:270</div>
<div class="a" style="left:847px;top:896px;width:691px;height:1px;background:#3a3a3a"></div>
<svg style="left:858px;top:904px" width="7" height="11"><path d="M1 1l4.500 4.500L1 10" fill="none" stroke="#4a7fe0" stroke-width="1.500"/></svg>
<div class="a" style="left:1538px;top:773px;width:15px;height:171px;background:#2e2e2e"></div>
<div class="a" style="left:847px;top:944px;width:706px;height:4px;background:#333"></div>
<div class="a" style="left:1530px;top:945px;width:23px;height:3px;background:#3ca04a"></div>
</body></html>
